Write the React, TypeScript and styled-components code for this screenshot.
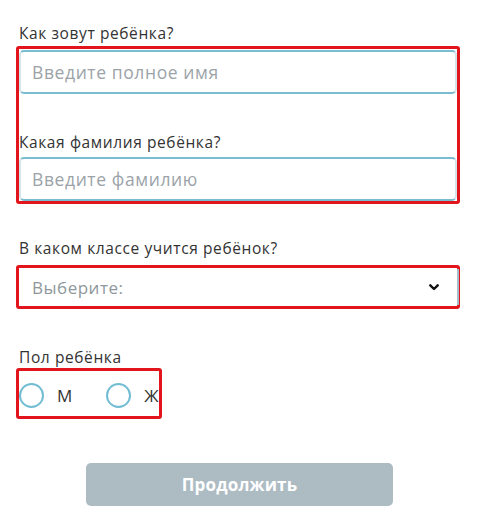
import React from "react";
import styled, { createGlobalStyle } from "styled-components";

const GlobalStyle = createGlobalStyle`
  html, body {
    margin: 0;
    padding: 0;
    background: #ffffff;
  }
  body {
    font-family: "Open Sans", "Noto Sans", "Liberation Sans", sans-serif;
    color: #333333;
  }
  * { box-sizing: border-box; }
`;

const Page = styled.div`
  width: 479px;
  padding-top: 23px;
`;

const Form = styled.form`
  display: flex;
  flex-direction: column;
  width: 444px;
  margin-left: 16px;
`;

const Label = styled.div<{ $mt?: number }>`
  font-size: 15.5px;
  letter-spacing: 0.6px;
  line-height: 20px;
  height: 20px;
  padding-left: 3px;
  margin-top: ${(p) => p.$mt ?? 0}px;
  color: #333333;
  white-space: nowrap;
`;

const InnerLabel = styled(Label)`
  padding-left: 0;
`;

const Highlight = styled.div<{ $mt?: number; $width?: number }>`
  display: flex;
  flex-direction: column;
  border: 3px solid #e2141c;
  border-radius: 3px;
  margin-top: ${(p) => p.$mt ?? 0}px;
  width: ${(p) => (p.$width ? `${p.$width}px` : "100%")};
`;

const FieldsBox = styled(Highlight)`
  padding-top: 1px;
`;

const TextInput = styled.input<{ $mt?: number }>`
  display: block;
  width: 100%;
  height: 44px;
  margin: ${(p) => p.$mt ?? 0}px 0 0;
  padding: 0 11px;
  border: 2px solid;
  border-color: #7bbdd0 #d3e5eb #7bbdd0 #d3e5eb;
  border-radius: 5px;
  font-family: "Open Sans", "Noto Sans", sans-serif;
  font-size: 17.5px;
  letter-spacing: 0.6px;
  color: #333333;
  background: #ffffff;
  outline: none;
  &::placeholder {
    color: #9ba3a8;
  }
`;

const SelectBox = styled.div`
  display: flex;
  align-items: center;
  justify-content: space-between;
  height: 38px;
  padding: 0 18px 0 13px;
  font-size: 17px;
  letter-spacing: 0.5px;
  color: #8f979c;
  box-shadow: 3px 0 0 -1px #a9bccb;
`;

const Chevron = styled.svg`
  width: 10px;
  height: 7px;
  margin-top: 1px;
`;

const RadioGroup = styled.div`
  display: flex;
  align-items: center;
  gap: 34px;
  height: 45px;
  padding-top: 4px;
`;

const RadioOption = styled.label`
  display: flex;
  align-items: center;
  gap: 13px;
  font-size: 17px;
  color: #333333;
  cursor: pointer;
`;

const RadioCircle = styled.span`
  display: block;
  width: 25px;
  height: 25px;
  border: 2px solid #72bdd3;
  border-radius: 50%;
  background: #ffffff;
`;

const Footer = styled.div`
  display: flex;
  justify-content: center;
  margin-top: 44px;
`;

const SubmitButton = styled.button`
  width: 307px;
  height: 43px;
  border: none;
  border-radius: 5px;
  background: #adbbc3;
  color: #ffffff;
  font-family: "Open Sans", "Noto Sans", sans-serif;
  font-weight: 700;
  font-size: 17px;
  letter-spacing: 0.2px;
  cursor: default;
`;

export default function App() {
  return (
    <>
      <GlobalStyle />
      <Page>
        <Form onSubmit={(e) => e.preventDefault()}>
          <Label>Как зовут ребёнка?</Label>
          <FieldsBox $mt={3}>
            <TextInput placeholder="Введите полное имя" />
            <InnerLabel $mt={38}>Какая фамилия ребёнка?</InnerLabel>
            <TextInput $mt={5} placeholder="Введите фамилию" />
          </FieldsBox>

          <Label $mt={34}>В каком классе учится ребёнок?</Label>
          <Highlight $mt={7}>
            <SelectBox>
              <span>Выберите:</span>
              <Chevron viewBox="0 0 10 7">
                <path
                  d="M1.3 1.3 L5 5 L8.7 1.3"
                  fill="none"
                  stroke="#111"
                  strokeWidth="2.4"
                  strokeLinecap="round"
                  strokeLinejoin="round"
                />
              </Chevron>
            </SelectBox>
          </Highlight>

          <Label $mt={38}>Пол ребёнка</Label>
          <Highlight $mt={1} $width={146}>
            <RadioGroup>
              <RadioOption>
                <RadioCircle />
                М
              </RadioOption>
              <RadioOption>
                <RadioCircle />
                Ж
              </RadioOption>
            </RadioGroup>
          </Highlight>
        </Form>
        <Footer>
          <SubmitButton type="button">Продолжить</SubmitButton>
        </Footer>
      </Page>
    </>
  );
}
